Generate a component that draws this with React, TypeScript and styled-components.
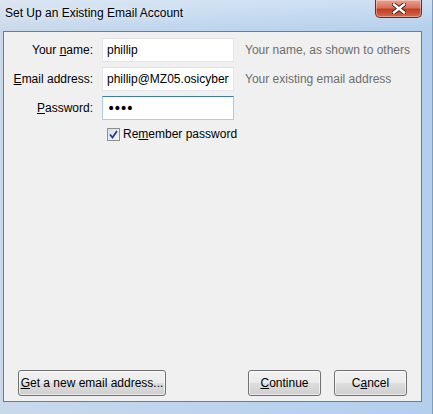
import React from 'react';
import styled, {createGlobalStyle} from 'styled-components';

// page

const GlobalStyle = createGlobalStyle`
    html, body {
        margin: 0;
        padding: 0;
        background: #b9d1ea;
    }
    body {
        font-family: "Liberation Sans", Arial, sans-serif;
        font-size: 12px;
        color: #000;
    }
`;

// window frame

const Window = styled.div`
    width: 433px;
    height: 414px;
    box-sizing: border-box;
    display: flex;
    flex-direction: column;
    background: linear-gradient(90deg, #c9d9ea 0%, #bed5ee 40%, #b3cfec 100%);
    border-right: 1px solid #7f9db9;
`;

const TitleBar = styled.div`
    height: 31px;
    flex: none;
    display: flex;
    justify-content: space-between;
    align-items: flex-start;
    padding: 0 10px 0 5px;
    background: linear-gradient(180deg, rgba(255,255,255,0.35) 0%, rgba(255,255,255,0) 100%);
`;

const Title = styled.div`
    margin-top: 5px;
    font-size: 12px;
    line-height: 16px;
    color: #000;
    text-shadow: 0 0 6px rgba(255,255,255,0.9);
`;

const CloseButton = styled.div`
    width: 45px;
    height: 17px;
    display: flex;
    align-items: center;
    justify-content: center;
    border: 1px solid #6b2a22;
    border-top: none;
    border-radius: 0 0 5px 5px;
    background: linear-gradient(180deg, #e8a493 0%, #d7725b 45%, #c23e22 55%, #d46a4e 100%);
    box-shadow: inset 0 0 0 1px rgba(255,255,255,0.35);
`;

const Client = styled.div`
    flex: 1;
    margin: 0 0 12px 3px;
    width: 419px;
    box-sizing: border-box;
    border: 1px solid #6d7d90;
    background: #f0f0f0;
    display: flex;
    flex-direction: column;
    justify-content: space-between;
`;

// form

const Form = styled.div`
    display: grid;
    grid-template-columns: 87px 132px auto;
    column-gap: 9px;
    row-gap: 5px;
    align-items: center;
    padding: 6px 0 0 2px;
`;

const Label = styled.label`
    text-align: right;
    white-space: nowrap;
`;

const Hint = styled.span`
    color: #6d6d6d;
    white-space: nowrap;
    margin-left: 2px;
`;

const Field = styled.input<{$focused?: boolean}>`
    box-sizing: border-box;
    width: 132px;
    height: 24px;
    padding: 0 4px;
    margin: 0;
    font-family: inherit;
    font-size: 12px;
    color: #000;
    background: #fff;
    outline: none;
    border: 1px solid ${p => p.$focused ? '#a9cdea' : '#e3e5e9'};
    border-top-color: ${p => p.$focused ? '#3d7bad' : '#dfe1e5'};
    &[type=password] {
        font-size: 14px;
        font-family: "DejaVu Sans", sans-serif;
        letter-spacing: -2px;
    }
`;

const CheckRow = styled.div`
    grid-column: 2 / 4;
    display: flex;
    align-items: center;
    gap: 3px;
    padding: 2px 0 0 5px;
`;

const Box = styled.span`
    width: 11px;
    height: 11px;
    border: 1px solid #8e8f8f;
    background: linear-gradient(135deg, #dcdcdc 0%, #f6f6f6 100%);
    display: flex;
    align-items: center;
    justify-content: center;
`;

// buttons

const ButtonBar = styled.div`
    display: flex;
    align-items: center;
    padding: 0 14px 5px 14px;
`;

const Button = styled.button<{$width: number}>`
    width: ${p => p.$width}px;
    height: 26px;
    box-sizing: border-box;
    font-family: inherit;
    font-size: 12px;
    white-space: nowrap;
    color: #000;
    padding: 0;
    border: 1px solid #707070;
    border-radius: 3px;
    background: linear-gradient(180deg, #f2f2f2 0%, #ebebeb 48%, #dddddd 52%, #cfcfcf 100%);
    box-shadow: inset 0 0 0 1px rgba(255,255,255,0.6);
`;

const Spacer = styled.div`
    flex: 1;
`;

const ButtonGap = styled.div`
    width: 13px;
`;

export default function App(): React.ReactElement {
    return <Window>
        <GlobalStyle />
        <TitleBar>
            <Title>Set Up an Existing Email Account</Title>
            <CloseButton>
                <svg width="14" height="11" viewBox="0 0 14 11">
                    <path d="M2 1.5 L12 9.5 M12 1.5 L2 9.5" stroke="#3a1a16" strokeWidth="4.2" strokeLinecap="square" />
                    <path d="M2 1.5 L12 9.5 M12 1.5 L2 9.5" stroke="#fff" strokeWidth="2.4" strokeLinecap="square" />
                </svg>
            </CloseButton>
        </TitleBar>
        <Client>
            <Form>
                <Label>Your <u>n</u>ame:</Label>
                <Field defaultValue="phillip" readOnly />
                <Hint>Your name, as shown to others</Hint>

                <Label><u>E</u>mail address:</Label>
                <Field defaultValue="phillip@MZ05.osicybertest.com" readOnly />
                <Hint>Your existing email address</Hint>

                <Label><u>P</u>assword:</Label>
                <Field type="password" defaultValue="abcd" readOnly $focused />
                <span />

                <CheckRow>
                    <Box>
                        <svg width="9" height="9" viewBox="0 0 9 9">
                            <path d="M1 4.5 L3.5 7.5 L8 1" fill="none" stroke="#1f3f8f" strokeWidth="1.8" />
                        </svg>
                    </Box>
                    <span>Re<u>m</u>ember password</span>
                </CheckRow>
            </Form>
            <ButtonBar>
                <Button $width={148}><u>G</u>et a new email address...</Button>
                <Spacer />
                <Button $width={73}><u>C</u>ontinue</Button>
                <ButtonGap />
                <Button $width={73}>C<u>a</u>ncel</Button>
            </ButtonBar>
        </Client>
    </Window>;
}
